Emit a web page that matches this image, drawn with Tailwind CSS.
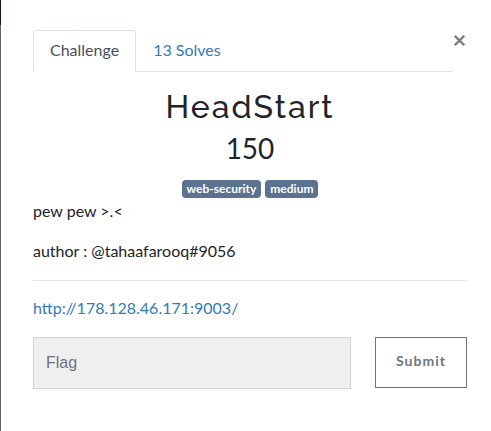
<!DOCTYPE html>
<html lang="en">
<head>
<meta charset="utf-8">
<meta name="viewport" content="width=device-width, initial-scale=1">
<title>HeadStart</title>
<script src="https://cdn.jsdelivr.net/npm/@tailwindcss/browser@4"></script>
</head>
<body class="flex min-h-screen bg-white font-[Lato,sans-serif] text-base text-[#212529]">
<div class="flex w-px shrink-0 flex-col bg-[#666666]"><div class="h-[25px] bg-[#240a2e]"></div></div>
<main class="min-w-0 flex-1 pt-[30px] pr-6 pb-8 pl-8">
  <header class="flex items-start">
    <nav class="flex flex-1 border-b border-[#dee2e6]">
      <a href="#challenge" class="-mb-px rounded-t border border-[#dee2e6] border-b-white bg-white px-4 pt-[7px] pb-[9px] text-[#495057]">Challenge</a>
      <a href="#solves" class="-mb-px border border-transparent px-4 pt-[7px] pb-[9px] text-[#337ab7]">13 Solves</a>
    </nav>
    <button type="button" aria-label="Close" class="flex h-[22px] w-[14px] items-end pb-[6px] pl-px text-[#7f7f7f]">
      <svg class="h-[11px] w-[11px]" viewBox="0 0 11 11" fill="none" stroke="currentColor" stroke-width="2.3" aria-hidden="true"><path d="M.8.8 10.2 10.2M10.2.8.8 10.2"/></svg>
    </button>
  </header>
  <section class="mt-4 flex flex-col items-center">
    <h2 class="font-[Raleway,Lato,sans-serif] text-[32px] leading-[38px] font-medium tracking-[2px]">HeadStart</h2>
    <h3 class="mt-[5px] text-[28px] leading-[34px]">150</h3>
    <div class="mt-[15px] flex gap-1 text-xs leading-[18px] font-bold text-white">
      <span class="rounded bg-[#5b7290] px-[5px]">web-security</span>
      <span class="rounded bg-[#5b7290] px-[5px]">medium</span>
    </div>
  </section>
  <p class="mt-px">pew pew &gt;.&lt;</p>
  <p class="mt-4">author : @tahaafarooq#9056</p>
  <hr class="mt-[17px] mb-[15px] border-[#e5e5e5]">
  <a href="http://178.128.46.171:9003/" class="block text-[#337ab7]">http://178.128.46.171:9003/</a>
  <form class="mt-[17px] flex items-start gap-6">
    <input type="text" aria-label="Flag" placeholder="Flag" class="h-[52px] min-w-0 flex-1 border border-[#ced4da] bg-[#efefef] px-3 font-['Liberation_Sans',sans-serif] placeholder:text-[#6c757d]">
    <button type="button" class="h-[51px] w-[92px] border border-[#6c757d] pb-1 text-sm font-bold tracking-[1px] text-[#6c757d]">Submit</button>
  </form>
</main>
</body>
</html>
